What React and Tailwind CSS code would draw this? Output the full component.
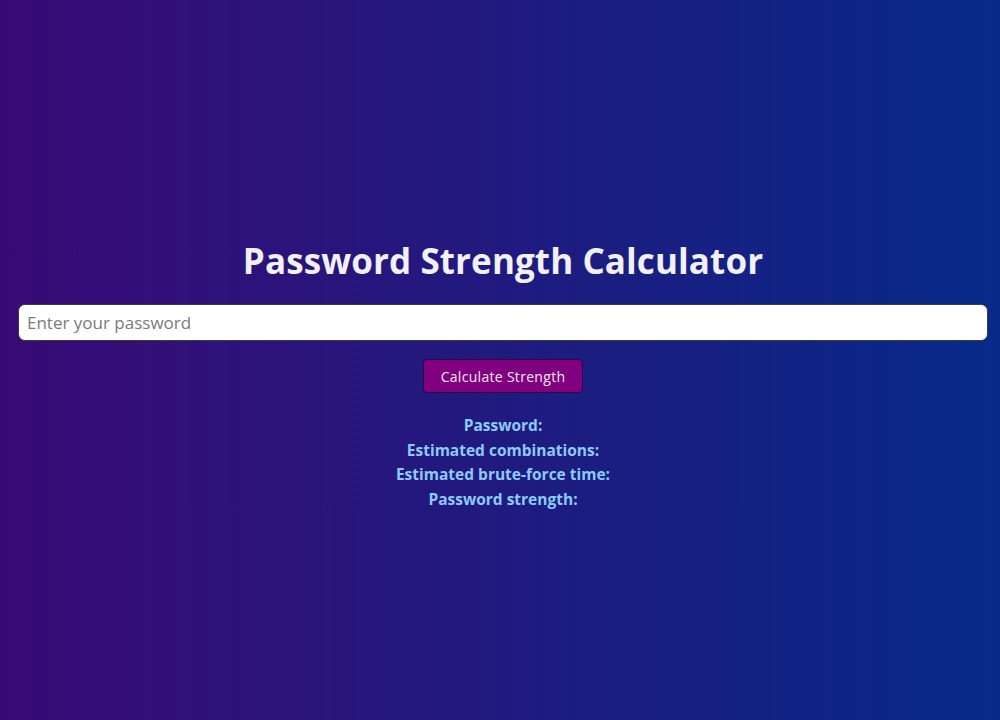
export default function App() {
  return (
    <div
      className="w-full h-[720px] flex flex-col items-center justify-center pl-[18px] pr-[12px] pt-[30px] bg-[linear-gradient(to_right,#390a76,#072a88)]"
      style={{ fontFamily: '"Open Sans", "DejaVu Sans", sans-serif' }}
    >
      <h1 className="text-[35px] leading-[44px] font-bold text-[#f0f0f5] tracking-[0.1px] mb-[21px]">
        Password Strength Calculator
      </h1>
      <input
        type="text"
        placeholder="Enter your password"
        className="w-full h-[37px] bg-white rounded-[7px] border border-[#3a3a4a] px-[8px] text-[17px] text-[#333] placeholder:text-[#7a7a7a] outline-none"
      />
      <button className="mt-[18px] w-[160px] h-[34px] bg-[#800080] border border-[#2a0a3a] rounded-[4px] text-[14px] tracking-[0.3px] text-[#f5e8f5]">
        Calculate Strength
      </button>
      <div className="mt-[20px] flex flex-col items-center text-[15.5px] leading-[24.5px] font-bold text-[#8ccaf8]">
        <div>Password:</div>
        <div>Estimated combinations:</div>
        <div>Estimated brute-force time:</div>
        <div>Password strength:</div>
      </div>
    </div>
  );
}
